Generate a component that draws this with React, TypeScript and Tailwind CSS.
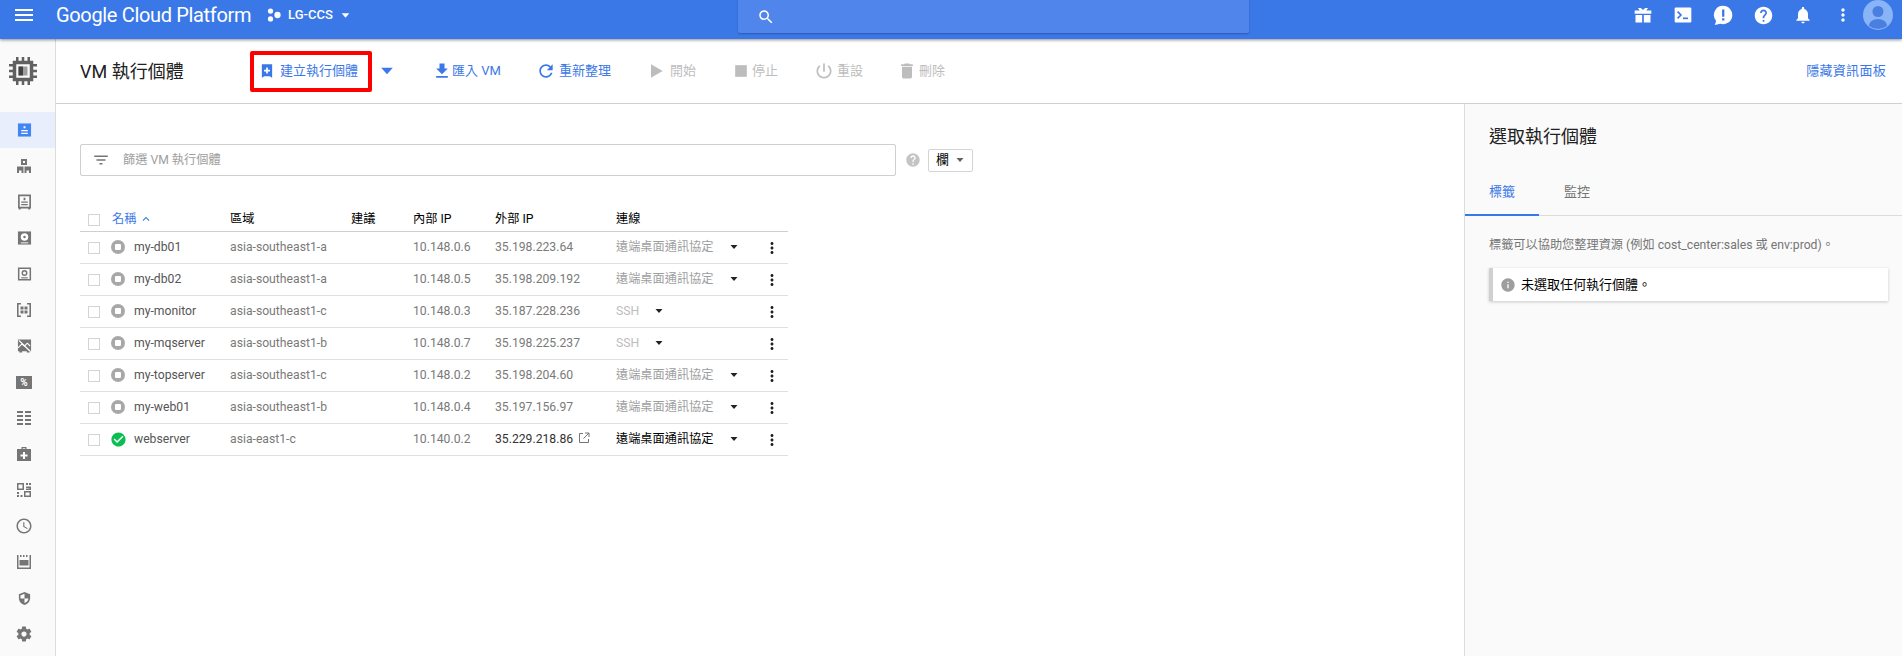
import React from "react";

const FONT = "font-['Roboto','Noto_Sans_CJK_TC',sans-serif]";

const paths = {
  menu: "M3 18h18v-2H3v2zm0-5h18v-2H3v2zm0-7v2h18V6H3z",
  search:
    "M15.5 14h-.79l-.28-.27C15.41 12.59 16 11.11 16 9.5 16 5.91 13.09 3 9.5 3S3 5.91 3 9.5 5.91 16 9.5 16c1.61 0 3.09-.59 4.23-1.57l.27.28v.79l5 4.99L20.49 19l-4.99-5zm-6 0C7.01 14 5 11.99 5 9.5S7.01 5 9.5 5 14 7.01 14 9.5 11.99 14 9.5 14z",
  help: "M12 2C6.48 2 2 6.48 2 12s4.48 10 10 10 10-4.48 10-10S17.52 2 12 2zm1 17h-2v-2h2v2zm2.07-7.75l-.9.92C13.45 12.9 13 13.5 13 15h-2v-.5c0-1.1.45-2.1 1.17-2.83l1.24-1.26c.37-.36.59-.86.59-1.41 0-1.1-.9-2-2-2s-2 .9-2 2H8c0-2.21 1.79-4 4-4s4 1.79 4 4c0 .88-.36 1.68-.93 2.25z",
  bell: "M12 22c1.1 0 2-.9 2-2h-4c0 1.1.89 2 2 2zm6-6v-5c0-3.07-1.64-5.64-4.5-6.32V4c0-.83-.67-1.5-1.5-1.5s-1.5.67-1.5 1.5v.68C7.63 5.36 6 7.92 6 11v5l-2 2v1h16v-1l-2-2z",
  more: "M12 8c1.1 0 2-.9 2-2s-.9-2-2-2-2 .9-2 2 .9 2 2 2zm0 2c-1.1 0-2 .9-2 2s.9 2 2 2 2-.9 2-2-.9-2-2-2zm0 6c-1.1 0-2 .9-2 2s.9 2 2 2 2-.9 2-2-.9-2-2-2z",
  refresh:
    "M17.65 6.35C16.2 4.9 14.21 4 12 4c-4.42 0-7.99 3.58-7.99 8s3.57 8 7.99 8c3.73 0 6.84-2.55 7.73-6h-2.08c-.82 2.33-3.04 4-5.65 4-3.31 0-6-2.69-6-6s2.69-6 6-6c1.66 0 3.14.69 4.22 1.78L13 11h7V4l-2.35 2.35z",
  play: "M6 4v16l14-8z",
  stop: "M5 5h14v14H5z",
  power:
    "M13 3h-2v10h2V3zm4.83 2.17l-1.42 1.42C17.99 7.86 19 9.81 19 12c0 3.87-3.13 7-7 7s-7-3.13-7-7c0-2.19 1.01-4.14 2.58-5.42L6.17 5.17C4.23 6.82 3 9.26 3 12c0 4.97 4.03 9 9 9s9-4.03 9-9c0-2.74-1.23-5.18-3.17-6.83z",
  trash: "M6 19c0 1.1.9 2 2 2h8c1.1 0 2-.9 2-2V7H6v12zM19 4h-3.5l-1-1h-5l-1 1H5v2h14V4z",
  download: "M19 9h-4V3H9v6H5l7 7 7-7zM5 18v2h14v-2H5z",
  filter: "M10 18h4v-2h-4v2zM3 6v2h18V6H3zm3 7h12v-2H6v2z",
  gear: "M19.43 12.98c.04-.32.07-.64.07-.98s-.03-.66-.07-.98l2.11-1.65c.19-.15.24-.42.12-.64l-2-3.46c-.12-.22-.39-.3-.61-.22l-2.49 1c-.52-.4-1.08-.73-1.69-.98l-.38-2.65C14.46 2.18 14.25 2 14 2h-4c-.25 0-.46.18-.49.42l-.38 2.65c-.61.25-1.17.59-1.69.98l-2.49-1c-.23-.09-.49 0-.61.22l-2 3.46c-.13.22-.07.49.12.64l2.11 1.65c-.04.32-.07.65-.07.98s.03.66.07.98l-2.11 1.65c-.19.15-.24.42-.12.64l2 3.46c.12.22.39.3.61.22l2.49-1c.52.4 1.08.73 1.69.98l.38 2.65c.03.24.24.42.49.42h4c.25 0 .46-.18.49-.42l.38-2.65c.61-.25 1.17-.59 1.69-.98l2.49 1c.23.09.49 0 .61-.22l2-3.46c.12-.22.07-.49-.12-.64l-2.11-1.65zM12 15.5c-1.93 0-3.5-1.57-3.5-3.5s1.57-3.5 3.5-3.5 3.5 1.57 3.5 3.5-1.57 3.5-3.5 3.5z",
  clock:
    "M11.99 2C6.47 2 2 6.48 2 12s4.47 10 9.99 10C17.52 22 22 17.52 22 12S17.52 2 11.99 2zM12 20c-4.42 0-8-3.58-8-8s3.58-8 8-8 8 3.58 8 8-3.58 8-8 8zm.5-13H11v6l5.25 3.15.75-1.23-4.5-2.67z",
  check:
    "M12 2C6.48 2 2 6.48 2 12s4.48 10 10 10 10-4.48 10-10S17.52 2 12 2zm-2 15l-5-5 1.41-1.41L10 14.17l7.59-7.59L19 8l-9 9z",
  info: "M12 2C6.48 2 2 6.48 2 12s4.48 10 10 10 10-4.48 10-10S17.52 2 12 2zm1 15h-2v-6h2v6zm0-8h-2V7h2v2z",
  up: "M7.41 15.41L12 10.83l4.59 4.58L18 14l-6-6-6 6z",
  caret: "M5 8h14l-7 8z",
};

function Icon({ d, className }: { d: string; className: string }) {
  return (
    <svg viewBox="0 0 24 24" fill="currentColor" className={className}>
      <path d={d} />
    </svg>
  );
}

function ProjectIcon() {
  return (
    <svg viewBox="0 0 16 16" fill="white" className="w-[14px] h-[14px]">
      <circle cx="4" cy="3.5" r="3" />
      <circle cx="4" cy="12.5" r="3" />
      <circle cx="12" cy="8" r="3.6" />
    </svg>
  );
}

function Gift() {
  return (
    <svg viewBox="0 0 24 24" fill="white" className="w-[20px] h-[20px]">
      <path d="M6 3.5h3.5L12 6l2.500-2.500H18L16 6.500h6v4H2v-4h6z" />
      <path d="M3 12h8v9H3zM13 12h8v9h-8z" />
    </svg>
  );
}

function Terminal() {
  return (
    <svg viewBox="0 0 24 24" className="w-[20px] h-[20px]">
      <rect x="2" y="3" width="20" height="18" rx="1.500" fill="white" />
      <path d="M5.500 8l4 4-4 4" fill="none" stroke="#3b78e7" strokeWidth="2" />
      <path d="M12 15h6v2h-6z" fill="#3b78e7" />
    </svg>
  );
}

function Feedback() {
  return (
    <svg viewBox="0 0 24 24" className="w-[22px] h-[22px]">
      <path d="M12 2a10 10 0 1 1-3 19.500L3 23l1.500-4.500A10 10 0 0 1 12 2z" fill="white" />
      <path d="M11 6h2.500v8H11zM11 15.500h2.500V18H11z" fill="#3b78e7" />
    </svg>
  );
}

function Avatar() {
  return (
    <svg viewBox="0 0 30 30" className="w-[30px] h-[30px]">
      <circle cx="15" cy="15" r="15" fill="#8ab4f8" />
      <circle cx="15" cy="11.500" r="5.500" fill="#4a7fe0" />
      <path d="M6 26c0-4 4-7 9-7s9 3 9 7a15 15 0 0 1-18 0z" fill="#4a7fe0" />
    </svg>
  );
}

function Chip() {
  return (
    <svg viewBox="0 0 30 30" className="w-[30px] h-[30px]">
      <path
        d="M8 1h2.500v4H8zM13.750 1h2.500v4h-2.500zM19.500 1H22v4h-2.500zM8 25h2.500v4H8zM13.750 25h2.500v4h-2.500zM19.500 25H22v4h-2.500zM1 8h4v2.500H1zM1 13.750h4v2.500H1zM1 19.500h4V22H1zM25 8h4v2.500h-4zM25 13.750h4v2.500h-4zM25 19.500h4V22h-4z"
        fill="#616161"
      />
      <rect x="6.500" y="6.500" width="17" height="17" fill="none" stroke="#616161" strokeWidth="3.500" />
      <rect x="10.500" y="10.500" width="9" height="9" fill="#9e9e9e" />
      <path d="M10.500 10.500h4.500v9h-4.500z" fill="#424242" />
    </svg>
  );
}

const G = "#757575";

const navIcons: React.ReactNode[] = [
  <svg key="0" viewBox="0 0 16 16" className="w-[15px] h-[16px]">
    <path d="M1 1h14v14H1z" fill="#4285f4" />
    <path d="M7 4h2v2H7zM4.500 8h7v1.300h-7zM4.500 11h7v1.300h-7z" fill="white" />
  </svg>,
  <svg key="1" viewBox="0 0 16 16" className="w-[16px] h-[16px]">
    <path d="M5 1h6v6H5z" fill={G} />
    <path d="M7 3h2v2H7z" fill="white" />
    <path d="M1 8.500h6.500V15H5.500v-2.500h-2.500V15H1zM8.500 8.500H15V15h-2v-2.500h-2.500V15h-2z" fill={G} />
  </svg>,
  <svg key="2" viewBox="0 0 16 16" className="w-[15px] h-[16px]">
    <path d="M2 1h12v13H2z" fill="none" stroke={G} strokeWidth="1.800" />
    <path d="M7 3.500h2V6H7zM4.500 7.500h7v1.200h-7zM4.500 10.200h7v1.200h-7zM2 14h2v2H2zM12 14h2v2h-2z" fill={G} />
  </svg>,
  <svg key="3" viewBox="0 0 16 16" className="w-[15px] h-[16px]">
    <path d="M1 1h14v14H1z" fill={G} />
    <circle cx="8" cy="7" r="4" fill="white" />
    <circle cx="8" cy="7" r="1.300" fill={G} />
    <path d="M4 12.700h8v1H4z" fill="white" />
  </svg>,
  <svg key="4" viewBox="0 0 16 16" className="w-[15px] h-[16px]">
    <path d="M1.800 1.800h12.400v12.400H1.800z" fill="none" stroke={G} strokeWidth="1.600" />
    <circle cx="8" cy="7" r="2.400" fill="none" stroke={G} strokeWidth="1.500" />
    <path d="M4.500 11.500h7v1.200h-7z" fill={G} />
  </svg>,
  <svg key="5" viewBox="0 0 16 16" className="w-[16px] h-[16px]" fill={G}>
    <path d="M1 1h4v1.600H2.600v10.800H5V15H1zM11 1h4v14h-4v-1.600h2.400V2.600H11z" />
    <path d="M4.500 4.500h3v3h-3zM8.500 4.500h3v3h-3zM4.500 8.500h3v3h-3zM8.500 8.500h3v3h-3z" />
  </svg>,
  <svg key="6" viewBox="0 0 16 16" className="w-[15px] h-[16px]">
    <path d="M1 1h14v12.500H1zM2.500 13.500h3V15h-3zM10.500 13.500h3V15h-3z" fill={G} />
    <path d="M2 2l12 11.500" stroke="white" strokeWidth="1.400" fill="none" />
    <path d="M1 10l4-4 3 2 3-3 3 3" stroke="white" strokeWidth="1.200" fill="none" />
  </svg>,
  <div
    key="7"
    className="w-[16px] h-[13px] bg-[#757575] text-white text-[10px] leading-[13px] text-center font-bold font-['Roboto',sans-serif]"
  >
    %
  </div>,
  <svg key="8" viewBox="0 0 16 16" className="w-[16px] h-[16px]" fill={G}>
    <path d="M1 1h6v2H1zM9 1h6v2H9zM1 5h6v2H1zM9 5h6v2H9zM1 9h6v2H1zM9 9h6v2H9zM1 13h6v2H1zM9 13h6v2H9z" />
  </svg>,
  <svg key="9" viewBox="0 0 16 16" className="w-[16px] h-[16px]">
    <path d="M5.500 3V1h5v2h-1.300V2.300H6.800V3zM1 3h14v12H1z" fill={G} />
    <path d="M7 6h2v2.500h2.500v2H9V13H7v-2.500H4.500v-2H7z" fill="white" />
  </svg>,
  <svg key="10" viewBox="0 0 16 16" className="w-[16px] h-[16px]" fill={G}>
    <path d="M1 1h7v7H1zm1.500 1.500v4h4v-4zM10 1h2v2h-2zM13 1h2v2h-2zM10 4.500h5v3.500h-5v-1.500h3.500v-.5H10zM1 10h2v2H1zM1 13h2v2H1zM4.500 13h2v2h-2zM8 9h7v6H8zm1.500 1.500v3h4v-3z" />
  </svg>,
  <Icon key="11" d={paths.clock} className="w-[18px] h-[18px] text-[#757575]" />,
  <svg key="12" viewBox="0 0 16 16" className="w-[16px] h-[16px]" fill={G}>
    <path d="M1 1h1.500v12.500h11V1H15v14H1zM4 1h1.500v2H4zM7 1h1.500v2H7zM10 1h1.500v2H10z" />
    <path d="M3.500 6h9v5.500h-9z" />
  </svg>,
  <svg key="13" viewBox="0 0 16 16" className="w-[15px] h-[17px]">
    <path d="M8 1l6 2.500v4c0 3.500-2.500 6.500-6 7.500-3.500-1-6-4-6-7.500v-4z" fill={G} />
    <path d="M8 3v5h4.300c-.4 2.200-2 4-4.300 4.800V8H3.700V4.700z" fill="white" />
  </svg>,
  <Icon key="14" d={paths.gear} className="w-[18px] h-[18px] text-[#757575]" />,
];

const vms = [
  { name: "my-db01", zone: "asia-southeast1-a", ip: "10.148.0.6", ext: "35.198.223.64", conn: "遠端桌面通訊協定" },
  { name: "my-db02", zone: "asia-southeast1-a", ip: "10.148.0.5", ext: "35.198.209.192", conn: "遠端桌面通訊協定" },
  { name: "my-monitor", zone: "asia-southeast1-c", ip: "10.148.0.3", ext: "35.187.228.236", conn: "SSH" },
  { name: "my-mqserver", zone: "asia-southeast1-b", ip: "10.148.0.7", ext: "35.198.225.237", conn: "SSH" },
  { name: "my-topserver", zone: "asia-southeast1-c", ip: "10.148.0.2", ext: "35.198.204.60", conn: "遠端桌面通訊協定" },
  { name: "my-web01", zone: "asia-southeast1-b", ip: "10.148.0.4", ext: "35.197.156.97", conn: "遠端桌面通訊協定" },
  { name: "webserver", zone: "asia-east1-c", ip: "10.140.0.2", ext: "35.229.218.86", conn: "遠端桌面通訊協定", running: true },
];

const COLS = "grid grid-cols-[31px_119px_121px_62px_82px_121px_147px_25px] items-center";

function Checkbox() {
  return <div className="ml-[8px] w-[12px] h-[12px] border border-[#d4d4d4] bg-white" />;
}

function VmRow({ vm }: { vm: (typeof vms)[number] }) {
  const isSsh = vm.conn === "SSH";
  return (
    <div className={`${COLS} h-[32px] border-b border-[#e0e0e0] text-[12.2px]`}>
      <Checkbox />
      <div className="flex items-center text-[#555]">
        {vm.running ? (
          <Icon d={paths.check} className="w-[17px] h-[17px] -mx-[1.5px] text-[#0cbd52]" />
        ) : (
          <div className="w-[14px] h-[14px] rounded-full bg-[#a8a8a8] flex items-center justify-center">
            <div className="w-[6px] h-[6px] rounded-[1px] bg-white" />
          </div>
        )}
        <span className="ml-[9px]">{vm.name}</span>
      </div>
      <div className="text-[#7a7a7a]">{vm.zone}</div>
      <div />
      <div className="text-[#7a7a7a]">{vm.ip}</div>
      <div className={`flex items-center ${vm.running ? "text-[#333]" : "text-[#7a7a7a]"}`}>
        <span>{vm.ext}</span>
        {vm.running && (
          <svg viewBox="0 0 12 12" fill="none" stroke="#757575" strokeWidth="1" className="ml-[5px] -mt-[3px] w-[12px] h-[12px]">
            <path d="M5 1.500H1.500v9h9V7M7 1h4v4M11 1L5.500 6.500" />
          </svg>
        )}
      </div>
      <div className="flex items-center">
        <span
          className={
            vm.running ? "text-black" : isSsh ? "text-[#bdbdbd]" : "text-[#9e9e9e]"
          }
        >
          {vm.conn}
        </span>
        <Icon d={paths.caret} className="ml-[14px] w-[12px] h-[12px] text-[#222]" />
      </div>
      <Icon d={paths.more} className="w-[18px] h-[18px] text-[#222]" />
    </div>
  );
}

function ToolButton({
  d,
  label,
  width,
  enabled,
  nudge,
}: {
  d: string;
  label: string;
  width: string;
  enabled?: boolean;
  nudge?: string;
}) {
  return (
    <div className={`flex items-center ${width} ${enabled ? "text-[#3b78e7]" : "text-[#bdbdbd]"}`}>
      <Icon d={d} className={`w-[20px] h-[20px] ${nudge ?? ""}`} />
      <span className="text-[13px]">{label}</span>
    </div>
  );
}

export default function App() {
  return (
    <div className={`${FONT} w-[1902px] h-[656px] overflow-hidden bg-white flex flex-col`}>
      {/* Top bar */}
      <header className="relative z-10 h-[39px] shrink-0 bg-[#3b78e7] flex shadow-[0_1px_3px_rgba(0,0,0,0.45)]">
        <div className="w-[738px] flex items-start pt-[3px]">
          <Icon d={paths.menu} className="ml-[12px] w-[24px] h-[24px] text-white" />
          <span className="ml-[20px] text-[20px] leading-[24px] text-white tracking-[-0.34px]">Google Cloud Platform</span>
          <div className="ml-[16px] mt-[5px] flex items-center">
            <ProjectIcon />
            <span className="ml-[7px] text-[13px] font-medium text-white leading-[14px]">LG-CCS</span>
            <Icon d={paths.caret} className="ml-[6px] w-[13px] h-[13px] text-white" />
          </div>
        </div>
        <div className="w-[511px] h-[33px] bg-[#5086eb] rounded-b-[2px] shadow-[0_1px_2px_rgba(0,0,0,0.25)] flex items-center pl-[19px]">
          <Icon d={paths.search} className="w-[18px] h-[18px] text-white" />
        </div>
        <div className="ml-auto mr-[9px] flex items-start">
          <div className="flex h-[30px] items-center">
            <div className="w-[40px] flex justify-center"><Gift /></div>
            <div className="w-[40px] flex justify-center"><Terminal /></div>
            <div className="w-[40px] flex justify-center"><Feedback /></div>
            <div className="w-[40px] flex justify-center"><Icon d={paths.help} className="w-[21px] h-[21px] text-white" /></div>
            <div className="w-[40px] flex justify-center"><Icon d={paths.bell} className="w-[20px] h-[20px] text-white" /></div>
            <div className="w-[40px] flex justify-center"><Icon d={paths.more} className="w-[20px] h-[20px] text-white" /></div>
          </div>
          <Avatar />
        </div>
      </header>

      <div className="flex flex-1 min-h-0">
        {/* Side nav */}
        <aside className="w-[56px] shrink-0 bg-[#fafafa] border-r border-[#dcdcdc]">
          <div className="w-[46px] h-[64px] flex items-center justify-center">
            <Chip />
          </div>
          <nav className="pt-[9px]">
            {navIcons.map((icon, i) => (
              <div
                key={i}
                className={`h-[36px] flex items-center ${i === 0 ? "bg-[#e8eefc]" : ""}`}
              >
                <div className="w-[48px] flex justify-center">{icon}</div>
              </div>
            ))}
          </nav>
        </aside>

        <main className="flex-1 flex flex-col min-w-0">
          {/* Toolbar */}
          <div className="h-[65px] shrink-0 border-b border-[#d0d0d0] flex items-center pl-[24px]">
            <h1 className="w-[170px] text-[18px] font-normal text-[#212121]">VM 執行個體</h1>
            <div className="w-[122px] h-[41px] border-[4px] border-[#ff0000] rounded-[2px] flex items-center pl-[7px] text-[#3b78e7]">
              <svg viewBox="0 0 14 16" className="w-[12px] h-[14px]">
                <path d="M1 0h12v16l-3-2H4l-3 2z" fill="currentColor" />
                <path d="M6 4h2v2.500h2.500v2H8V11H6V8.500H3.500v-2H6z" fill="white" />
              </svg>
              <span className="ml-[7px] text-[13px]">建立執行個體</span>
            </div>
            <Icon d={paths.caret} className="ml-[5px] w-[20px] h-[20px] text-[#3b78e7]" />
            <div className="w-[35px]" />
            <ToolButton d={paths.download} label="匯入 VM" width="w-[107px]" enabled />
            <ToolButton d={paths.refresh} label="重新整理" width="w-[111px]" enabled nudge="-ml-[3px] mr-[3px]" />
            <ToolButton d={paths.play} label="開始" width="w-[82px]" nudge="-ml-[4px] mr-[4px]" />
            <ToolButton d={paths.stop} label="停止" width="w-[85px]" nudge="-ml-[1px] mr-[1px]" />
            <ToolButton d={paths.power} label="重設" width="w-[82px]" nudge="-ml-[3px] mr-[3px]" />
            <ToolButton d={paths.trash} label="刪除" width="w-[90px]" nudge="-ml-[2px] mr-[2px]" />
            <span className="ml-auto mr-[16px] text-[13px] tracking-[0.3px] text-[#3b78e7]">隱藏資訊面板</span>
          </div>

          <div className="flex flex-1 min-h-0">
            {/* Instances */}
            <section className="flex-1 min-w-0 pl-[24px] pt-[40px]">
              <div className="flex items-center">
                <div className="w-[816px] h-[32px] border border-[#cfcfcf] rounded-[2px] flex items-center pl-[11px]">
                  <Icon d={paths.filter} className="w-[18px] h-[18px] text-[#757575]" />
                  <span className="ml-[13px] text-[12.2px] text-[#9e9e9e]">篩選 VM 執行個體</span>
                </div>
                <Icon d={paths.help} className="ml-[9px] w-[16px] h-[16px] text-[#c4c4c4]" />
                <div className="ml-[7px] w-[45px] h-[23px] border border-[#d4d4d4] rounded-[2px] flex items-center pl-[7px] text-[13px] text-black">
                  欄
                  <Icon d={paths.caret} className="ml-[5px] w-[12px] h-[12px] text-[#616161]" />
                </div>
              </div>

              <div className="mt-[28px] w-[708px]">
                <div className={`${COLS} h-[28px] pt-[4px] border-b border-[#cfcfcf] text-[12.2px] text-black`}>
                  <Checkbox />
                  <div className="flex items-center pl-[1px] text-[#3b78e7]">
                    名稱
                    <Icon d={paths.up} className="ml-[3px] w-[14px] h-[14px]" />
                  </div>
                  <div>區域</div>
                  <div>建議</div>
                  <div>內部 IP</div>
                  <div>外部 IP</div>
                  <div>連線</div>
                  <div />
                </div>
                {vms.map((vm) => (
                  <VmRow key={vm.name} vm={vm} />
                ))}
              </div>
            </section>

            {/* Info panel */}
            <section className="w-[438px] shrink-0 bg-[#fafafa] border-l border-[#dcdcdc]">
              <h2 className="pl-[24px] pt-[21px] h-[65px] text-[18px] font-normal leading-[24px] text-[#212121]">選取執行個體</h2>
              <div className="flex h-[47px] border-b border-[#dcdcdc] text-[13px]">
                <div className="w-[74px] pl-[24px] pt-[13px] border-b-2 border-[#3b78e7] h-[47px] text-[#3b78e7]">標籤</div>
                <div className="pl-[25px] pt-[13px] text-[#757575]">監控</div>
              </div>
              <p className="pl-[24px] mt-[20px] text-[12.2px] leading-[18px] text-[#757575]">
                標籤可以協助您整理資源 (例如 cost_center:sales 或 env:prod)。
              </p>
              <div className="ml-[24px] mt-[14px] w-[399px] h-[33px] bg-white border-l-4 border-[#d0d0d0] shadow-[0_1px_3px_rgba(0,0,0,0.2)] flex items-center pl-[7px]">
                <Icon d={paths.info} className="w-[16px] h-[16px] text-[#9e9e9e]" />
                <span className="ml-[5px] text-[13px] text-black">未選取任何執行個體。</span>
              </div>
            </section>
          </div>
        </main>
      </div>
    </div>
  );
}
